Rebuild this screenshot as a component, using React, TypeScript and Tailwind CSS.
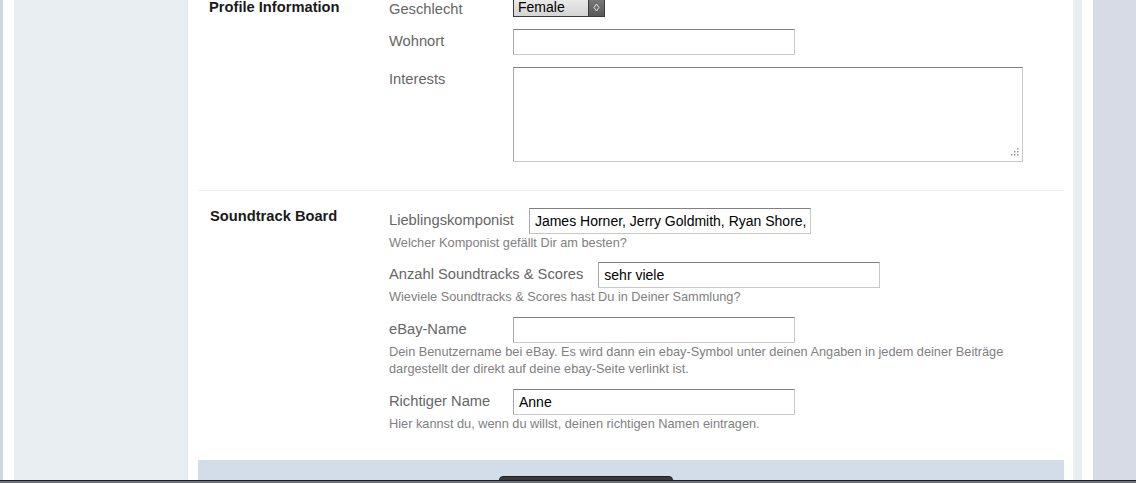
import React from "react";

const font = { fontFamily: '"Liberation Sans", Arial, sans-serif' };

function TextInput({ value = "", width = "w-[282px]" }: { value?: string; width?: string }) {
	return (
		<div
			className={`${width} h-[26px] shrink-0 border border-[#c8c8c8] border-t-[#808080] border-l-[#a9a9a9] bg-white pl-[5px] text-[14px] leading-[24px] text-black whitespace-nowrap overflow-hidden`}
		>
			{value}
		</div>
	);
}

function Row({
	label,
	children,
	help,
}: {
	label: string;
	children: React.ReactNode;
	help?: React.ReactNode;
}) {
	return (
		<div className="flex flex-col">
			<div className="flex items-start">
				<div className="min-w-[124px] shrink-0 pr-[15px] pt-[5px] text-[14.7px] leading-[15px] text-[#666666] whitespace-nowrap">
					{label}
				</div>
				{children}
			</div>
			{help && (
				<div className="pr-[8px] text-[12.75px] leading-[17px] text-[#808080]">{help}</div>
			)}
		</div>
	);
}

function FakeSelect() {
	return (
		<div className="flex h-[20px] w-[92px] shrink-0 border border-[#3c3c3c] bg-gradient-to-b from-[#ececec] to-[#d4d4d4]">
			<div className="flex-1 pl-[4px] text-[14px] leading-[18px] text-black">Female</div>
			<div className="flex w-[16px] items-center justify-center border-l border-[#3c3c3c] bg-gradient-to-b from-[#7a7a7a] to-[#5a5a5a]">
				<svg width="7" height="9" viewBox="0 0 7 9">
					<polygon points="3.5,1 6,4.5 3.5,8 1,4.5" fill="none" stroke="#e6e6e6" strokeWidth="1" />
				</svg>
			</div>
		</div>
	);
}

function TextArea() {
	return (
		<div className="flex h-[95px] w-[510px] shrink-0 items-end justify-end border border-[#c8c8c8] border-t-[#808080] border-l-[#a9a9a9] bg-white p-[3px]">
			<svg width="11" height="11" viewBox="0 0 11 11">
				<g fill="#9a9a9a">
					<rect x="9" y="1" width="1.5" height="1.5" />
					<rect x="6" y="4" width="1.5" height="1.5" />
					<rect x="9" y="4" width="1.5" height="1.5" />
					<rect x="3" y="7" width="1.5" height="1.5" />
					<rect x="6" y="7" width="1.5" height="1.5" />
					<rect x="9" y="7" width="1.5" height="1.5" />
				</g>
			</svg>
		</div>
	);
}

export default function App() {
	return (
		<div className="flex h-[483px] flex-col overflow-hidden bg-white" style={font}>
			<div className="flex h-[480px] overflow-hidden">
				<div className="w-[3px] bg-[#d0d6df]" />
				<div className="w-[11px] bg-white" />
				<div className="w-[174px] border-r border-[#e2e6ea] bg-[#e9eef2]" />

				{/* main content */}
				<div className="w-[885px] shrink-0 pl-[10px] pr-[9px]">
					<div className="-mt-[3px] flex flex-col">
						{/* Profile Information */}
						<section className="flex border-b border-[#ececec] pb-[28px]">
							<h2 className="w-[191px] shrink-0 pl-[11px] pt-[2px] text-[14.7px] font-bold leading-[17px] text-[#1a1a1a]">
								Profile Information
							</h2>
							<div className="flex flex-1 flex-col gap-[12px]">
								<Row label="Geschlecht">
									<FakeSelect />
								</Row>
								<Row label="Wohnort">
									<TextInput />
								</Row>
								<Row label="Interests">
									<TextArea />
								</Row>
							</div>
						</section>

						{/* Soundtrack Board */}
						<section className="flex pb-[28px] pt-[17px]">
							<h2 className="w-[191px] shrink-0 pl-[12px] text-[14.7px] font-bold leading-[17px] text-[#1a1a1a]">
								Soundtrack Board
							</h2>
							<div className="flex flex-1 flex-col">
								<Row
									label="Lieblingskomponist"
									help="Welcher Komponist gefällt Dir am besten?"
								>
									<TextInput value="James Horner, Jerry Goldmith, Ryan Shore," />
								</Row>
								<div className="mt-[11px]">
									<Row
										label="Anzahl Soundtracks & Scores"
										help="Wieviele Soundtracks & Scores hast Du in Deiner Sammlung?"
									>
										<TextInput value="sehr viele" />
									</Row>
								</div>
								<div className="mt-[12px]">
									<Row
										label="eBay-Name"
										help="Dein Benutzername bei eBay. Es wird dann ein ebay-Symbol unter deinen Angaben in jedem deiner Beiträge dargestellt der direkt auf deine ebay-Seite verlinkt ist."
									>
										<TextInput />
									</Row>
								</div>
								<div className="mt-[12px]">
									<Row
										label="Richtiger Name"
										help="Hier kannst du, wenn du willst, deinen richtigen Namen eintragen."
									>
										<TextInput value="Anne" />
									</Row>
								</div>
							</div>
						</section>

						{/* submit bar */}
						<div className="h-[20px] overflow-hidden bg-[#d3dde9] pl-[301px] pt-[16px]">
							<div className="h-[24px] w-[174px] rounded-[4px] border border-[#1f1f1f] bg-[#3a3a3a]" />
						</div>
					</div>
				</div>

				<div className="w-[9px] bg-[#e8edf1]" />
				<div className="w-[11px] bg-white" />
				<div className="flex-1 bg-[#d7dbe5]" />
			</div>
			<div className="h-px bg-[#1e1e1e]" />
			<div className="flex-1 bg-[#6f7179]" />
		</div>
	);
}
